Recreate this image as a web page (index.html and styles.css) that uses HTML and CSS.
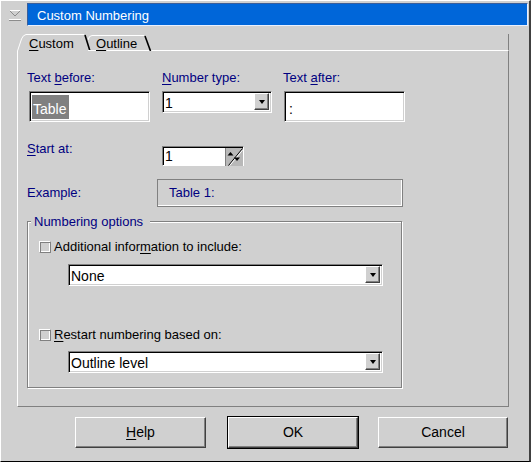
FILE: index.html
```html
<!DOCTYPE html>
<html>
<head>
<meta charset="utf-8">
<link rel="stylesheet" href="styles.css">
</head>
<body>
<div class="window">
  <div class="titlebar">
    <div class="winmenu">
      <svg width="14" height="12" viewBox="0 0 14 12"><path d="M1.5 1.5 L12.5 1.5 L7 7 Z" fill="none" stroke="#8c8c8c"/><path d="M1.5 1.5 L12.5 1.5" stroke="#fff"/><path d="M1 10.5 H13" stroke="#fff"/><path d="M1 11.5 H13" stroke="#8c8c8c"/></svg>
    </div>
    <div class="caption">Custom Numbering</div>
  </div>

  <div class="tabs">
    <div class="tab tab-active">
      <svg class="tab-shape" width="74" height="17" viewBox="0 0 74 17"><path d="M0.5 17 L4.5 5 Q6 1 9 0.5 L67 0.5" fill="none" stroke="#fff"/><path d="M68 1 L73 17" fill="none" stroke="#000" stroke-width="1.6"/></svg>
      <span class="tab-label"><u>C</u>ustom</span>
    </div>
    <div class="tab tab-inactive">
      <svg class="tab-shape" width="64" height="17" viewBox="0 0 64 17"><path d="M0 6 Q1 1.5 4 1.5 L56 1.5" fill="none" stroke="#fff"/><path d="M57 2 L62.5 17" fill="none" stroke="#000" stroke-width="1.6"/></svg>
      <span class="tab-label"><u>O</u>utline</span>
    </div>
    <div class="tab-fill"></div>
  </div>

  <div class="panel">
    <div class="row-top">
      <div class="col col-1">
        <div class="lbl">Text <u>b</u>efore:</div>
        <div class="field field-1"><span class="sel">Table</span></div>
      </div>
      <div class="col col-2">
        <div class="lbl"><u>N</u>umber type:</div>
        <div class="combo combo-num"><span class="combo-text">1</span><span class="drop"><span class="arrow"></span></span></div>
      </div>
      <div class="col col-3">
        <div class="lbl">Text <u>a</u>fter:</div>
        <div class="field field-3"><span class="plain">:</span></div>
      </div>
    </div>

    <div class="row-start">
      <div class="lbl lbl-start"><u>S</u>tart at:</div>
      <div class="spinner">
        <span class="spin-text">1</span>
        <span class="spin-btn">
          <svg width="17" height="18" viewBox="0 0 17 18"><path d="M2.5 17.5 L16.5 0.5" stroke="#000"/><path d="M3.8 17.5 L16.5 2.2" stroke="#fff"/><path d="M1.5 7.5 L7.5 7.5 L4.5 4 Z" fill="#000"/><path d="M8 9.5 L14 9.5 L11 13 Z" fill="#000"/></svg>
        </span>
      </div>
    </div>

    <div class="row-example">
      <div class="lbl lbl-example">Example:</div>
      <div class="example-box">Table 1:</div>
    </div>

    <div class="group">
      <div class="legend">Numbering options</div>
      <div class="check-row check-row-1">
        <span class="checkbox"></span>
        <span class="check-label">Additional infor<u>m</u>ation to include:</span>
      </div>
      <div class="combo combo-wide combo-none"><span class="combo-text">None</span><span class="drop"><span class="arrow"></span></span></div>
      <div class="check-row check-row-2">
        <span class="checkbox"></span>
        <span class="check-label"><u>R</u>estart numbering based on:</span>
      </div>
      <div class="combo combo-wide combo-outline"><span class="combo-text">Outline level</span><span class="drop"><span class="arrow"></span></span></div>
    </div>
  </div>

  <div class="buttons">
    <div class="btn btn-help"><span><u>H</u>elp</span></div>
    <div class="btn-default"><div class="btn btn-ok"><span>OK</span></div></div>
    <div class="btn btn-cancel"><span>Cancel</span></div>
  </div>
</div>
</body>
</html>
```

FILE: styles.css
```css
* { box-sizing: border-box; }
html, body { margin: 0; padding: 0; }
body {
  width: 531px;
  height: 462px;
  overflow: hidden;
  background: #d0d0d0;
  font-family: "Liberation Sans", Arial, sans-serif;
  font-size: 13px;
  line-height: 15px;
}
u { text-decoration: underline; text-underline-offset: 2px; }

.window {
  width: 531px;
  height: 462px;
  background: #d0d0d0;
  border-top: 1px solid #ffffff;
  border-left: 1px solid #ffffff;
  border-right: 2px solid #404040;
  border-bottom: 1px solid #000000;
  display: flex;
  flex-direction: column;
}

/* title bar */
.titlebar {
  display: flex;
  height: 23px;
  margin-top: 2px;
}
.winmenu {
  width: 26px;
  display: flex;
  align-items: center;
  justify-content: center;
  padding-left: 2px;
}
.caption {
  width: 501px;
  background: #0066d9;
  border-top: 1px solid #3a5e9a;
  border-left: 1px solid #3a5e9a;
  border-right: 1px solid #e8f0ff;
  border-bottom: 1px solid #e8f0ff;
  color: #ffffff;
  padding-left: 9px;
  padding-top: 4px;
  font-size: 13px;
}

/* tabs */
.tabs {
  display: flex;
  height: 17px;
  margin-top: 8px;
  margin-left: 16px;
  width: 492px;
}
.tab { position: relative; height: 17px; }
.tab-shape { position: absolute; left: 0; top: 0; }
.tab-active { width: 74px; }
.tab-inactive { width: 64px; margin-left: -3px; border-bottom: 1px solid #ffffff; }
.tab-fill { flex: 1; border-bottom: 1px solid #ffffff; border-right: 1px solid #808080; }
.tab-label { position: relative; display: block; color: #000; }
.tab-active .tab-label { padding-left: 12px; padding-top: 2px; }
.tab-inactive .tab-label { padding-left: 8px; padding-top: 2px; }

/* panel */
.panel {
  margin-left: 16px;
  width: 492px;
  height: 356px;
  border-left: 1px solid #ffffff;
  border-right: 1px solid #808080;
  border-bottom: 1px solid #808080;
  padding-left: 9px;
  padding-top: 19px;
  display: flex;
  flex-direction: column;
}
.lbl { color: #000080; white-space: nowrap; }

.row-top { display: flex; }
.col { display: flex; flex-direction: column; }
.col-1 { width: 135px; }
.col-2 { width: 121px; }
.field {
  width: 121px;
  height: 31px;
  margin-top: 6px;
  background: #ffffff;
  border-top: 1px solid #808080;
  border-left: 1px solid #808080;
  border-right: 1px solid #ffffff;
  border-bottom: 1px solid #ffffff;
  box-shadow: inset 1px 1px 0 #000, inset -1px -1px 0 #d0d0d0;
  display: flex;
  align-items: flex-end;
  padding: 2px 3px 2px 2px;
}
.field-1 { margin-left: 2px; }
.field-3 { margin-left: 1px; }
.sel {
  background: #808080;
  color: #ffffff;
  height: 24px;
  padding: 7px 3px 0 1px;
  font-size: 14px;
}
.plain { font-size: 14px; padding-left: 2px; padding-bottom: 2px; }

.combo {
  display: flex;
  height: 22px;
  background: #ffffff;
  border-top: 1px solid #808080;
  border-left: 1px solid #808080;
  border-right: 1px solid #ffffff;
  border-bottom: 1px solid #ffffff;
  box-shadow: inset 1px 1px 0 #000, inset -1px -1px 0 #d0d0d0;
  padding: 1px 2px 2px 1px;
}
.combo-num { width: 110px; margin-top: 6px; }
.combo-text { flex: 1; padding-left: 1px; padding-top: 3px; font-size: 14px; color: #000; }
.drop {
  width: 15px;
  background: #d0d0d0;
  border-top: 1px solid #ffffff;
  border-left: 1px solid #ffffff;
  border-right: 1px solid #404040;
  border-bottom: 1px solid #404040;
  box-shadow: inset -1px -1px 0 #808080;
  display: flex;
  align-items: center;
  justify-content: center;
}
.arrow {
  width: 0;
  height: 0;
  border-left: 3.5px solid transparent;
  border-right: 3.5px solid transparent;
  border-top: 4px solid #000;
  margin-top: 1px;
}

.row-start { display: flex; margin-top: 19px; }
.lbl-start { width: 135px; }
.spinner {
  display: flex;
  width: 82px;
  height: 20px;
  margin-top: 5px;
  background: #ffffff;
  border-top: 1px solid #808080;
  border-left: 1px solid #808080;
  border-right: 1px solid #ffffff;
  border-bottom: 1px solid #ffffff;
  box-shadow: inset 1px 1px 0 #000;
  padding: 1px 0 0 1px;
}
.spin-text { flex: 1; font-size: 14px; padding-top: 1px; padding-left: 1px; }
.spin-btn {
  width: 18px;
  height: 18px;
  background: #b8b8b8;
  border-left: 1px solid #808080;
  display: block;
}
.spin-btn svg { display: block; }

.row-example { display: flex; margin-top: 13px; }
.lbl-example { width: 130px; margin-top: 6px; }
.example-box {
  width: 246px;
  height: 28px;
  border: 1px solid #808080;
  box-shadow: inset -1px -1px 0 #ffffff;
  color: #000080;
  padding: 5px 0 0 11px;
}

.group {
  margin-top: 14px;
  width: 375px;
  height: 167px;
  border: 1px solid #808080;
  box-shadow: inset 1px 1px 0 #ffffff, 1px 1px 0 #ffffff;
  display: flex;
  flex-direction: column;
}
.legend {
  align-self: flex-start;
  margin-top: -8px;
  margin-left: 3px;
  padding: 0 7px 0 3px;
  background: #d0d0d0;
  color: #000080;
}
.check-row { display: flex; align-items: flex-start; padding-left: 11px; }
.check-row-1 { margin-top: 10px; }
.check-row-2 { margin-top: 41px; }
.checkbox {
  width: 12px;
  height: 12px;
  margin-top: 2px;
  background: #d0d0d0;
  border-top: 1px solid #ffffff;
  border-left: 1px solid #ffffff;
  border-right: 1px solid #808080;
  border-bottom: 1px solid #808080;
  box-shadow: inset 1px 1px 0 #808080, inset -1px -1px 0 #ffffff;
}
.check-label { margin-left: 3px; color: #000; }
.combo-wide { width: 315px; margin-left: 40px; }
.combo-none { margin-top: 10px; }
.combo-outline { margin-top: 9px; }

/* buttons */
.buttons {
  display: flex;
  align-items: center;
  margin-top: 9px;
  padding-left: 74px;
}
.btn {
  width: 131px;
  height: 31px;
  background: #d0d0d0;
  border-top: 1px solid #ffffff;
  border-left: 1px solid #ffffff;
  border-right: 1px solid #404040;
  border-bottom: 1px solid #404040;
  box-shadow: inset -1px -1px 0 #808080;
  display: flex;
  align-items: center;
  justify-content: center;
  color: #000;
  font-size: 14px;
}
.btn-default {
  margin-left: 21px;
  border: 1px solid #000;
}
.btn-ok { width: 130px; }
.btn-cancel { width: 130px; margin-left: 19px; }
```
